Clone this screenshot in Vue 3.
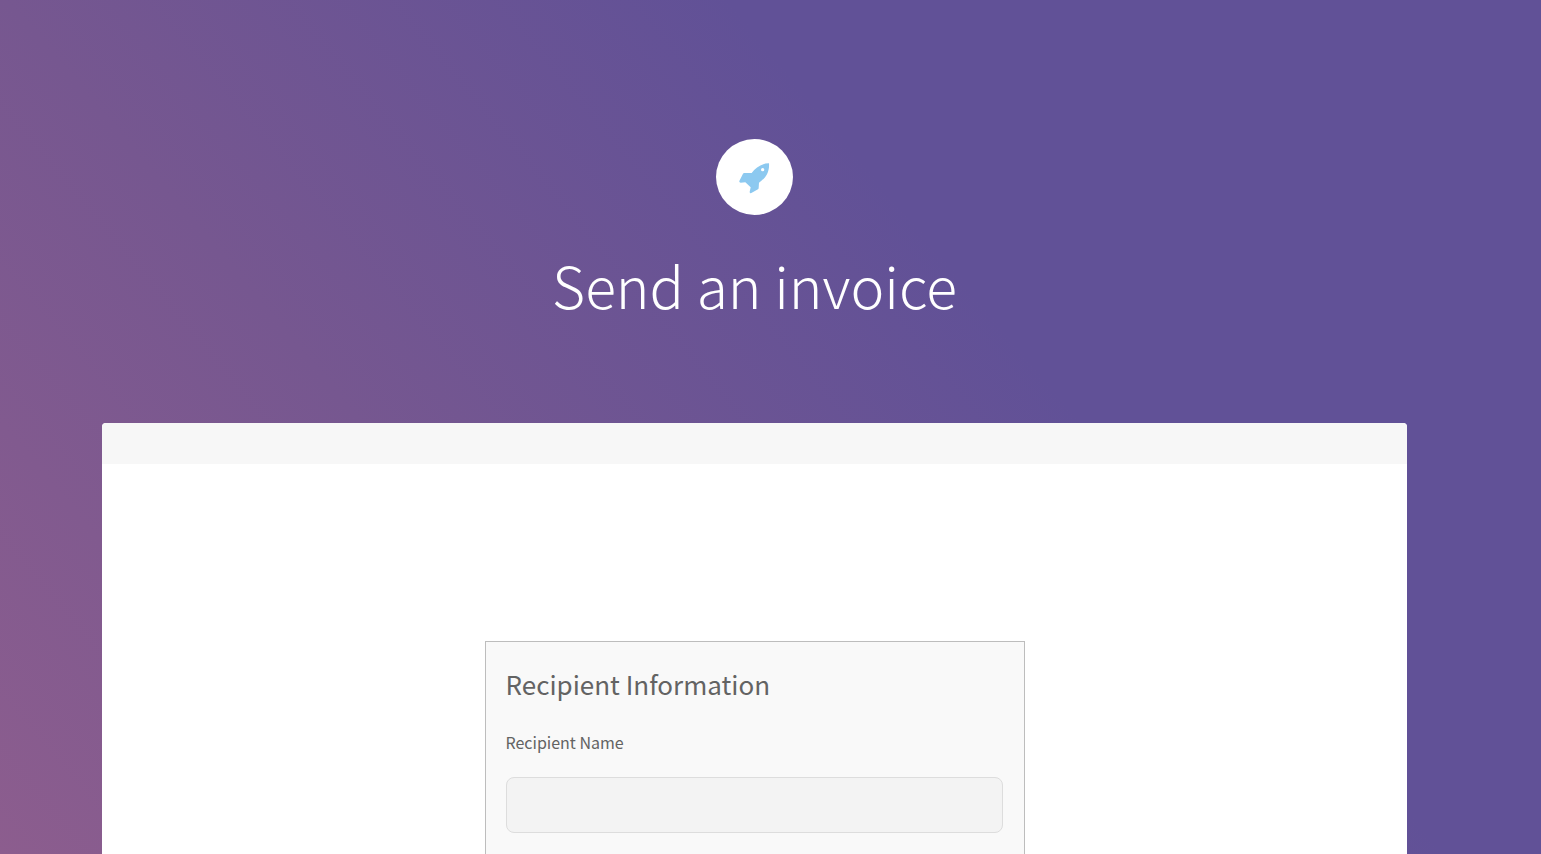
<script setup>
import { ref } from 'vue'

const recipientName = ref('')
</script>

<template>
  <div class="page">
    <header class="header">
      <span class="logo">
        <svg viewBox="-7 -13 108 108" aria-hidden="true">
          <path
            fill="currentColor"
            fill-rule="evenodd"
            d="M89 0C68 0 49 12 37 29L15 29Q12 29 11 31L0 53Q-1 58 4 58L18 57L34 72L31 85Q31 91 36 89L56 78Q58 77 58 74L59 58C78 45 91 27 89 0ZM70 14A5 5 0 1 1 70 24A5 5 0 1 1 70 14Z"
          />
        </svg>
      </span>
      <h1>Send an invoice</h1>
    </header>

    <main class="main">
      <nav class="bar" aria-label="Sections"></nav>
      <form class="panel" @submit.prevent>
        <h2>Recipient Information</h2>
        <label for="recipient-name">Recipient Name</label>
        <input id="recipient-name" v-model="recipientName" type="text" />
      </form>
    </main>
  </div>
</template>

<style>
body {
  margin: 0;
}
</style>

<style scoped>
.page {
  box-sizing: border-box;
  min-height: 100vh;
  padding: 0 134px 0 102px;
  display: flex;
  flex-direction: column;
  background: linear-gradient(50deg, #8c5d8e 0%, #765790 32%, #615197 64%, #615197 100%);
  font-family: 'Noto Sans CJK SC', 'Open Sans', sans-serif;
  color: #636363;
}

.header {
  padding: 139px 0 95px;
  display: flex;
  flex-direction: column;
  align-items: center;
  gap: 25px;
}

.logo {
  width: 77px;
  height: 76px;
  border-radius: 50%;
  display: flex;
  align-items: center;
  justify-content: center;
  background: #fff;
  color: #8cc9f0;
}

.logo svg {
  width: 36px;
  height: 36px;
}

h1 {
  margin: 0;
  font-size: 57px;
  line-height: 88px;
  font-weight: 300;
  color: #fff;
}

.main {
  flex: 1;
  display: flex;
  flex-direction: column;
  border-radius: 4px 4px 0 0;
  overflow: hidden;
  background: #fff;
}

.bar {
  height: 41px;
  background: #f7f7f7;
}

.panel {
  box-sizing: border-box;
  flex: 1;
  width: 100%;
  max-width: 540px;
  margin: 177px auto 0;
  padding: 20px 21px 20px 20px;
  display: flex;
  flex-direction: column;
  border: 1px solid #bdbdbd;
  border-bottom: 0;
  background: #f9f9f9;
}

h2 {
  margin: 0 0 20px;
  font-size: 26px;
  line-height: 44px;
  font-weight: 400;
}

label {
  margin-bottom: 18px;
  font-size: 16px;
  line-height: 33px;
}

input {
  box-sizing: border-box;
  width: 100%;
  height: 56px;
  padding: 0 16px;
  border: 1px solid #dddddd;
  border-radius: 8px;
  background: #f3f3f3;
  font: inherit;
  color: inherit;
}
</style>
